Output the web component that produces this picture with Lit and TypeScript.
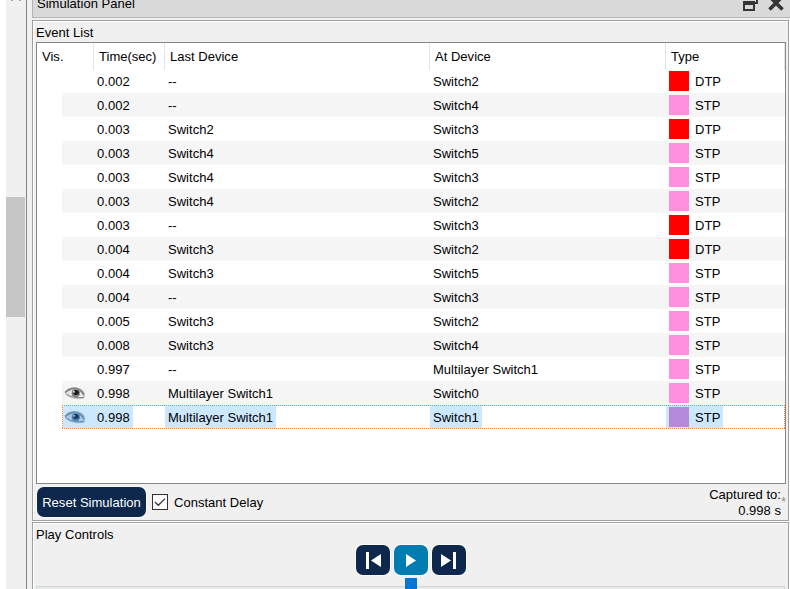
import { LitElement, html, css } from "lit";
import { customElement, property } from "lit/decorators.js";
import { classMap } from "lit/directives/class-map.js";

type Row = [string, string, string, string];
const rows: Row[] = [
  ["0.002", "--", "Switch2", "DTP"],
  ["0.002", "--", "Switch4", "STP"],
  ["0.003", "Switch2", "Switch3", "DTP"],
  ["0.003", "Switch4", "Switch5", "STP"],
  ["0.003", "Switch4", "Switch3", "STP"],
  ["0.003", "Switch4", "Switch2", "STP"],
  ["0.003", "--", "Switch3", "DTP"],
  ["0.004", "Switch3", "Switch2", "DTP"],
  ["0.004", "Switch3", "Switch5", "STP"],
  ["0.004", "--", "Switch3", "STP"],
  ["0.005", "Switch3", "Switch2", "STP"],
  ["0.008", "Switch3", "Switch4", "STP"],
  ["0.997", "--", "Multilayer Switch1", "STP"],
  ["0.998", "Multilayer Switch1", "Switch0", "STP"],
  ["0.998", "Multilayer Switch1", "Switch1", "STP"],
];

@customElement("eye-icon")
class EyeIcon extends LitElement {
  @property({ type: Boolean, reflect: true }) tinted = false;
  static styles = css`
    :host { display: block; width: 22px; height: 16px; --lid: #858585; --skin: #c9c9c9; --white: #e9e9e9; --iris: #808080; --dark: #1c1c1c; --glint: #fff; }
    :host([tinted]) { --lid: #6a92b5; --skin: #8fb4d3; --white: #a9cbe6; --iris: #4f80ab; --dark: #173f66; --glint: #b9daf2; }
    svg { display: block; }
    .skin { fill: var(--skin); }
    .white { fill: var(--white); }
    .iris { fill: var(--iris); }
    .dark { fill: var(--dark); }
    .lid { fill: none; stroke: var(--lid); stroke-width: 1.7; }
    .thin { fill: none; stroke: var(--lid); stroke-width: 1; }
    .glint { fill: var(--glint); }
  `;
  render() {
    return html`<svg width="22" height="16" viewBox="0 0 22 16">
      <path class="skin" d="M1 7 Q4 2.5 10 2 Q17 2 20.5 7 L21 13 Q17 15 11 14 Q5 13 1 9Z"/>
      <path class="white" d="M2 8.5 Q6 4.5 12 5 Q17 6 19.5 11.5 Q13 13.5 7 12Z"/>
      <circle class="iris" cx="11.8" cy="8.3" r="4.1"/>
      <ellipse class="dark" cx="12" cy="7.6" rx="2.9" ry="2.5"/>
      <path class="lid" d="M1 7.5 Q5 3.3 11 3.4 Q17 4 20 10"/>
      <path class="thin" d="M2.5 9 Q8 13.5 19.5 12.5"/>
      <circle class="glint" cx="10" cy="6.8" r=".9"/>
    </svg>`;
  }
}

@customElement("event-row")
class EventRow extends LitElement {
  @property({ attribute: false }) row: Row = rows[0];
  @property({ type: Boolean }) shaded = false;
  @property({ type: Boolean }) seen = false;
  @property({ type: Boolean }) selected = false;
  static styles = css`
    :host { display: block; padding-left: 25px; }
    .row { position: relative; display: grid; grid-template-columns: 32px 71px 265px 236px 1fr; height: 24px; align-items: center; }
    .shaded { background: #f5f5f5; }
    .cell { height: 24px; line-height: 26px; padding: 0 3px; justify-self: start; box-sizing: border-box; white-space: nowrap; }
    .vis { width: 32px; padding: 4px 0 0 2px; }
    .type { display: flex; align-items: center; gap: 6px; }
    .name { padding-top: 2px; }
    .swatch { width: 20px; height: 20px; background: #ff8fdf; }
    .swatch.red { background: #ff0000; }
    .selected .cell { background: #cce8ff; }
    .selected .swatch { background: #b388dd; }
    .focus {
      --h: repeating-linear-gradient(90deg, #ff7f1e 0 1px, #fff 1px 2px);
      --v: repeating-linear-gradient(180deg, #ff7f1e 0 1px, #fff 1px 2px);
      position: absolute; inset: 0;
      background: var(--h) 0 0 / 100% 1px no-repeat, var(--h) 0 100% / 100% 1px no-repeat, var(--v) 0 0 / 1px 100% no-repeat, var(--v) 100% 0 / 1px 100% no-repeat;
    }
  `;
  render() {
    const [time, last, at, type] = this.row;
    return html`<div class=${classMap({ row: true, shaded: this.shaded, selected: this.selected })}>
      <div class="cell vis">${this.seen ? html`<eye-icon ?tinted=${this.selected}></eye-icon>` : ""}</div>
      <div class="cell">${time}</div><div class="cell">${last}</div><div class="cell">${at}</div>
      <div class="cell type"><span class=${classMap({ swatch: true, red: type === "DTP" })}></span><span class="name">${type}</span></div>
      ${this.selected ? html`<div class="focus"></div>` : ""}
    </div>`;
  }
}

@customElement("app-root")
class AppRoot extends LitElement {
  static styles = css`
    :host { display: flex; width: 790px; height: 589px; overflow: hidden; background: #f0f0f0; color: #000; font: 13px/16px "Liberation Sans", Arial, sans-serif; letter-spacing: 0.02px; }
    .gutter { width: 6px; background: #fff; flex: none; }
    .scroll { width: 20px; flex: none; display: flex; flex-direction: column; box-sizing: border-box; align-items: flex-start; }
    .scroll svg { display: block; height: 197px; }
    .thumb { width: 19px; height: 120px; background: #c6c6c6; }
    .dock { flex: 1; min-width: 0; border-left: 1px solid #828296; padding-left: 5px; }
    .title { height: 18px; box-sizing: border-box; background: #d9d9d9; border-bottom: 1px solid #b5b5b5; border-left: 1px solid #b5b5b5; display: flex; justify-content: space-between; padding: 0 6px 0 4px; }
    .title span { margin-top: -4px; height: 16px; }
    .title svg { display: block; }
    .panel { width: 757px; box-sizing: border-box; border: 1px solid #a0a0a0; box-shadow: inset 1px 1px #fff, 1px 1px #fff; display: flex; flex-direction: column; }
    .events { height: 501px; margin-top: 2px; padding: 0 2px 0 3px; }
    .label { height: 21px; line-height: 23px; white-space: nowrap; }
    .list { height: 442px; box-sizing: border-box; border: 1px solid #828790; background: #fff; flex: none; }
    .head { display: grid; grid-template-columns: 57px 71px 265px 236px 1fr; height: 26px; line-height: 27px; }
    .head span { border-right: 1px solid #e5e5e5; padding-left: 5px; white-space: nowrap; }
    .foot { flex: 1; display: flex; align-items: center; position: relative; }
    .reset { width: 109px; height: 30px; border-radius: 7px; background: #0d274d; color: #fff; line-height: 31px; text-align: center; margin-left: 1px; white-space: nowrap; box-shadow: 0 0 0 1px #fafafa; }
    .check { width: 16px; height: 16px; margin: 0 6px; display: block; }
    .delay { padding-top: 2px; }
    .captured { margin-left: auto; text-align: right; padding-right: 5px; margin-top: 1px; }
    .captured div { white-space: nowrap; }
    .star { position: absolute; right: 0; top: 12px; font-size: 12px; line-height: 12px; color: #888; }
    .play { height: 80px; margin-top: 1px; padding: 0 3px; }
    .buttons { display: flex; gap: 4px; margin: 1px 0 0 320px; }
    .btn { width: 34px; height: 30px; border-radius: 7px; background: #0d274d; box-shadow: 0 0 0 1px #fafafa; }
    .btn.on { background: #007cb0; }
    .btn svg { display: block; }
    .slider { position: relative; margin-top: 11px; height: 12px; border: 1px solid #d6d6d6; background: #e7eaea; }
    .knob { position: absolute; left: 368px; top: -9px; width: 12px; height: 20px; background: #0078d7; }
  `;
  render() {
    return html`
      <div class="gutter"></div>
      <div class="scroll"><svg width="19" height="197"><path d="M5 0h2M13 0h2" stroke="#606060"/></svg><div class="thumb"></div></div>
      <div class="dock">
        <div class="title"><span>Simulation Panel</span>
          <svg width="42" height="17" viewBox="0 0 42 17"><path d="M2 2H12V10H2Z M6 0V-2H15V3H12" fill="none" stroke="#353535" stroke-width="2"/><path d="M1 3.5H13" stroke="#353535" stroke-width="3"/><path d="M27.5 -3.5L40.5 9.5M40.5 -3.5L27.5 9.5" stroke="#353535" stroke-width="3.6"/></svg>
        </div>
        <div class="panel events">
          <div class="label">Event List</div>
          <div class="list">
            <div class="head"><span>Vis.</span><span>Time(sec)</span><span>Last Device</span><span>At Device</span><span>Type</span></div>
            ${rows.map((r, i) => html`<event-row .row=${r} ?shaded=${i % 2 === 1} ?seen=${i > 12} ?selected=${i === 14}></event-row>`)}
          </div>
          <div class="foot">
            <div class="reset">Reset Simulation</div>
            <svg class="check" viewBox="0 0 16 16"><rect x=".5" y=".5" width="15" height="15" fill="#fff" stroke="#333"/><path d="M3 8L6.3 11.3L13 4.6" fill="none" stroke="#333" stroke-width="1.3"/></svg>
            <span class="delay">Constant Delay</span>
            <div class="captured"><div>Captured to:</div><div>0.998 s</div></div><span class="star">*</span>
          </div>
        </div>
        <div class="panel play">
          <div class="label">Play Controls</div>
          <div class="buttons">
            <div class="btn"><svg width="34" height="30" fill="#fff"><path d="M10 7H13V24H10ZM25 9V22L15 15.5Z"/></svg></div>
            <div class="btn on"><svg width="34" height="30" fill="#fff"><path d="M12 9V22L22 15.5Z"/></svg></div>
            <div class="btn"><svg width="34" height="30" fill="#fff"><path d="M21 7H24V24H21ZM9 9V22L19 15.5Z"/></svg></div>
          </div>
          <div class="slider"><div class="knob"></div></div>
        </div>
      </div>`;
  }
}
